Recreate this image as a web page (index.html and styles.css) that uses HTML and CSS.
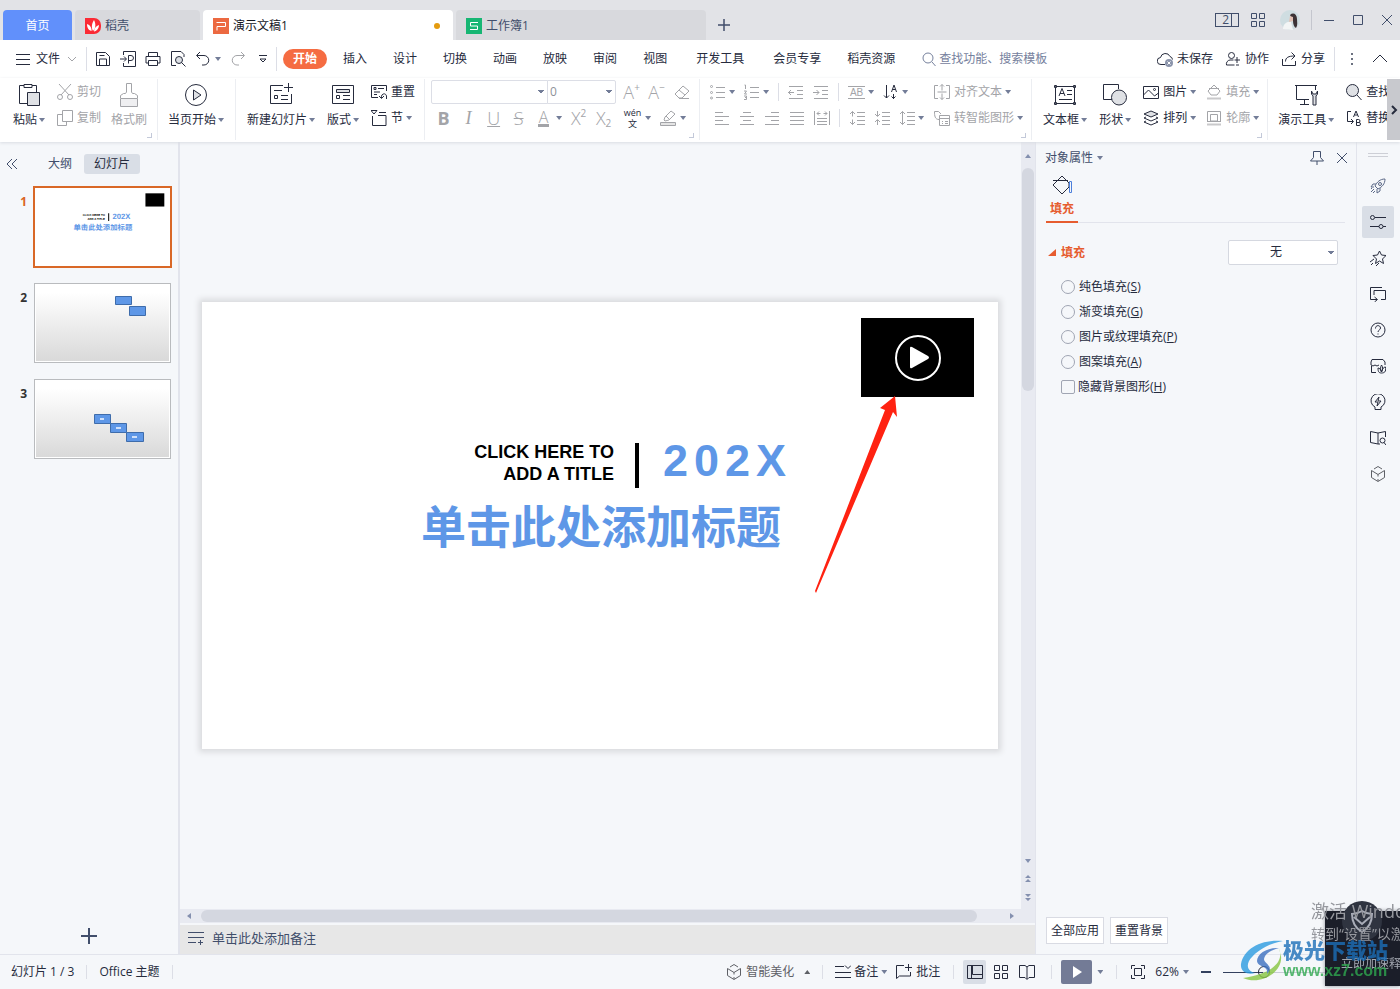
FILE: index.html
```html
<!DOCTYPE html>
<html lang="zh-CN">
<head>
<meta charset="utf-8">
<title>演示文稿1</title>
<link rel="stylesheet" href="styles.css">
</head>
<body>
<svg class="sprite" aria-hidden="true">
  <symbol id="i-plus" viewBox="0 0 16 16"><path d="M8 0v16M0 8h16" stroke-width="2"/></symbol>
  <symbol id="i-cube" viewBox="0 0 16 16"><path d="M4 3l4-2.500 4 2.500M1.500 4.500v7L8 15.500l6.500-4v-7L8 8.500zM8 8.500v2M8 15v-2"/></symbol>
  <symbol id="i-lines" viewBox="0 0 16 16"><path d="M6 3.500h9M6 8.500h9M6 13.500h9"/></symbol>
</svg>

<header class="titlebar">
  <nav class="tabs">
    <button class="tab home">首页</button>
    <button class="tab docer"><svg class="ic" viewBox="0 0 16 16"><path class="solid" fill="#fb2b35" d="M0 0h9a7 7 0 0 1 7 7v2a7 7 0 0 1-7 7H0z"/><path fill="#fff" class="solid" d="M8 13C6 9 7 5 9 2c2 4 2 8-1 11zM6.500 13C3 12 2 9 2 6c3 1 5 4 4.500 7zM9 13.500c0-3 2-5.500 5-6.500 0 3-2 6-5 6.500z"/></svg>稻壳</button>
    <button class="tab doc active"><svg class="ic" viewBox="0 0 16 16"><path class="solid" fill="#ec6941" d="M0 0h16v16H0z"/><path stroke="#fff" d="M4 12.500V8.500h8.500v-4H3.500"/></svg>演示文稿1<span class="dirty"></span></button>
    <button class="tab doc"><svg class="ic" viewBox="0 0 16 16"><path class="solid" fill="#16b673" d="M0 0h16v16H0z"/><path stroke="#fff" d="M12 4.500H4.500v3.500h7v3.500H4"/></svg>工作簿1</button>
    <button class="newtab" aria-label="新建"><svg class="s12" viewBox="0 0 16 16"><use href="#i-plus"/></svg></button>
  </nav>
  <div class="winctl">
    <button class="two" aria-label="窗口数"><span>2</span><i></i></button>
    <button class="apps" aria-label="应用"><svg class="ic" viewBox="0 0 16 16"><path d="M1.500 1.500h5v5h-5zM9.500 1.500h5v5h-5zM1.500 9.500h5v5h-5zM9.500 9.500h5v5h-5z"/></svg></button>
    <svg class="avatar" viewBox="0 0 20 20"><circle class="solid" cx="10" cy="10" r="10" fill="#cfdde1"/><path class="solid" fill="#f3f5f5" d="M3 19c0-5 4-8 8-7l2 8z"/><path class="solid" fill="#3d3336" d="M10 5c3-3 7-1 7 4 0 3 1 6-1 9-2-1-3-4-3-7z"/><path class="solid" fill="#e2c2b5" d="M10 6l3 1v4l-4 1z"/></svg>
    <span class="bar"></span>
    <button aria-label="最小化"><svg class="s12" viewBox="0 0 12 12"><path d="M1 6.500h10"/></svg></button>
    <button aria-label="最大化"><svg class="s12" viewBox="0 0 12 12"><path d="M1.500 1.500h9v9h-9z"/></svg></button>
    <button aria-label="关闭"><svg class="s12" viewBox="0 0 12 12"><path d="M1 1l10 10M11 1L1 11"/></svg></button>
  </div>
</header>

<div class="menubar">
  <button class="file"><svg class="ic" viewBox="0 0 16 16"><path d="M1 3.500h14M1 8.500h14M1 13.500h14"/></svg>文件<svg class="s10 pale" viewBox="0 0 10 10"><path d="M1 3l4 4 4-4"/></svg></button>
  <span class="bar"></span>
  <div class="quick">
    <button aria-label="保存"><svg class="ic" viewBox="0 0 16 16"><path d="M1.500 1.500h9l4 4v9h-13zM4.500 14v-6h7v6M4.500 4.500h5"/></svg></button>
    <button aria-label="输出"><svg class="ic" viewBox="0 0 16 16"><path d="M3.500 4V.500h12v15h-12V12M0 8h6M4 5.500L6.500 8 4 10.500M8.500 12.500v-8h2.500a2.200 2.200 0 0 1 0 5H8.500"/></svg></button>
    <button aria-label="打印"><svg class="ic" viewBox="0 0 16 16"><path d="M3.500 5V1.500h9V5M3.500 12h-2.500V5.500h14V12h-2.500M3.500 9.500h9v5h-9z"/></svg></button>
    <button aria-label="打印预览"><svg class="ic" viewBox="0 0 16 16"><path d="M6 14.500H1.500v-14H11l3 3V6"/><circle cx="9" cy="9" r="3.500" fill="#dde0e5"/><path d="M11.500 11.500l4 4"/></svg></button>
    <button aria-label="撤销"><svg class="ic" viewBox="0 0 16 16"><path d="M5 1L1.500 4.500 5 8M2 4.500h7a4.500 4.500 0 0 1 0 9.500H7"/></svg><i class="caret"></i></button>
    <button class="pale" aria-label="恢复"><svg class="ic" viewBox="0 0 16 16"><path d="M11 1l3.500 3.500L11 8M14 4.500H7A4.500 4.500 0 0 0 7 14h2"/></svg></button>
    <button aria-label="更多"><svg class="s10" viewBox="0 0 10 10"><path d="M1 1.500h8M2 5l3 3 3-3z"/></svg></button>
  </div>
  <span class="bar"></span>
  <nav class="menus">
    <button class="on">开始</button><button>插入</button><button>设计</button><button>切换</button><button>动画</button><button>放映</button><button>审阅</button><button>视图</button><button class="wide">开发工具</button><button class="wide">会员专享</button><button>稻壳资源</button>
  </nav>
  <label class="search"><svg class="ic" viewBox="0 0 16 16"><circle cx="6" cy="7" r="5"/><path d="M10 11l3.500 4"/></svg><input type="text" placeholder="查找功能、搜索模板"></label>
  <div class="account">
    <button><svg class="ic" viewBox="0 0 16 16"><path d="M8 13.500H4a3.500 3.500 0 0 1-.5-7A5 5 0 0 1 13 5.500a3.500 3.500 0 0 1 2.500 3"/><circle class="solid" cx="12" cy="12" r="4" fill="#8b94ab"/><path stroke="#fff" d="M10.500 10.500l3 3M13.500 10.500l-3 3"/></svg>未保存</button>
    <button><svg class="ic" viewBox="0 0 16 16"><circle cx="6.500" cy="4.500" r="3"/><path d="M8.500 9H5a4 4 0 0 0-3.500 5h8M12 6v6M9.500 9h5.500M11 14h3"/></svg>协作</button>
    <button><svg class="ic" viewBox="0 0 16 16"><path d="M1.500 8v6.500h13V10M4.500 10.500c0-4 3-5.500 9-5.500M10.500 1.500L14 5l-3.500 3.500"/></svg>分享</button>
    <span class="bar"></span>
    <button aria-label="更多"><svg class="ic" viewBox="0 0 16 16"><path stroke-width="2" stroke="#6b7180" d="M8 2v2M8 7v2M8 12v2"/></svg></button>
    <button aria-label="折叠"><svg class="ic" viewBox="0 0 16 16"><path d="M1 11l7-7 7 7"/></svg></button>
  </div>
</div>

<section class="ribbon">
  <div class="group g1">
    <button class="big"><svg class="s24" viewBox="0 0 24 24"><path d="M7 2.500H2.500v18H10M15 2.500h4.500V9M7 1.500h8v3H7z"/><path fill="#dfe1e5" d="M10.500 9.500h12v13h-12z"/></svg><span>粘贴<i class="caret"></i></span></button>
    <div class="rows pale">
      <button class="sm"><svg class="ic" viewBox="0 0 16 16"><path d="M2 0l10 11M14 0L4 11"/><circle cx="3" cy="13" r="2.500"/><circle cx="13" cy="13" r="2.500"/></svg>剪切</button>
      <button class="sm"><svg class="ic" viewBox="0 0 16 16"><path d="M5.500 .500h10v11h-10zM5 4.500H.500v11h9V12"/></svg>复制</button>
    </div>
    <button class="big pale"><svg class="s24" viewBox="0 0 24 24"><path fill="#efeff1" d="M3.500 15.500h17v8h-17z"/><path d="M3.500 15V12.500l3-2h2L9.500 9V.500h5V9l1 1.500h2l3 2V15"/></svg><span>格式刷</span></button>
    <i class="corner"></i>
  </div>
  <div class="group g2">
    <button class="big"><svg class="s24" viewBox="0 0 24 24"><circle cx="12" cy="12" r="10.500"/><path fill="#dfe1e5" d="M9.500 7v10l7.500-5z"/></svg><span>当页开始<i class="caret"></i></span></button>
  </div>
  <div class="group g3">
    <button class="big"><svg class="s24" viewBox="0 0 24 24"><path d="M14 2.500H1.500v18h21V11M19.500 0v9M15 4.500h9M5 7.500h8M5.500 12.500h3v3h-3zM12 12.500h7M12 16.500h7"/></svg><span>新建幻灯片<i class="caret"></i></span></button>
    <button class="big"><svg class="s24" viewBox="0 0 24 24"><path d="M1.500 2.500h21v18h-21zM5.500 12.500h3v3h-3zM12 12.500h7M12 16.500h7"/><path fill="#dfe1e5" d="M5.500 6.500h13v3h-13z"/></svg><span>版式<i class="caret"></i></span></button>
    <div class="rows">
      <button class="sm"><svg class="ic" viewBox="0 0 16 16"><path d="M7 13.500H.500v-12h15V7M3 3.500h2v2H3zM7 4.500h6M3 8h6M3 10.500h3M8 12l2.500 2.500L13 12M10.500 14c-1-4 4-6 5-2v3"/></svg>重置</button>
      <button class="sm"><svg class="ic" viewBox="0 0 16 16"><path d="M1.500 6v9.500h13.500v-10H7M0 .500h6L3 4zM8 2.500h7"/></svg>节<i class="caret"></i></button>
    </div>
  </div>
  <div class="group g4">
    <div class="rows">
      <div class="line">
        <select class="font" aria-label="字体"><option></option></select><select class="size" aria-label="字号"><option>0</option></select>
        <button class="t">A<sup>+</sup></button><button class="t">A<sup>−</sup></button>
        <button class="t"><svg class="ic" viewBox="0 0 16 16"><path d="M9 2l6 5-7 7H5L1 10zM5 6l6 5M5 14.500h10"/></svg></button>
      </div>
      <div class="line fmt">
        <button class="t"><b>B</b></button><button class="t"><em>I</em></button><button class="t"><u>U</u></button><button class="t"><s>S</s></button><button class="t"><span class="fc">A</span></button><i class="caret"></i>
        <button class="t">X<sup>2</sup></button><button class="t">X<sub>2</sub></button>
        <button class="t wen"><span>wén</span><span>文</span></button><i class="caret"></i>
        <button class="t"><svg class="ic" viewBox="0 0 16 16"><path d="M4 10l1-3 6-6 4 3-6 6-4 1zM6 6l4 4"/><path fill="#e4e4e4" d="M.500 12.500h15v3H.500z"/></svg></button><i class="caret"></i>
      </div>
    </div>
    <i class="corner"></i>
  </div>
  <div class="group g5 pale">
    <div class="col">
      <div class="line">
        <button class="i"><svg class="ic" viewBox="0 0 16 16"><use href="#i-lines"/><circle cx="1.500" cy="2.500" r="1"/><circle cx="1.500" cy="8.500" r="1"/><circle cx="1.500" cy="14" r="1"/></svg><i class="caret"></i></button>
        <button class="i"><svg class="ic" viewBox="0 0 16 16"><use href="#i-lines"/><path d="M.500 1h1v4M0 7h2.500L.500 10H3M0 12h2.500v3.500H0M1 13.500h1"/></svg><i class="caret"></i></button>
        <span class="bar"></span>
        <button class="i"><svg class="ic" viewBox="0 0 16 16"><path d="M1 2.500h14M9 6.500h6M9 10.500h6M1 14.500h14M0 8.500h6M3 6L.500 8.500 3 11"/></svg></button>
        <button class="i"><svg class="ic" viewBox="0 0 16 16"><path d="M1 2.500h14M9 6.500h6M9 10.500h6M1 14.500h14M0 8.500h6M3.500 6L6 8.500 3.500 11"/></svg></button>
        <span class="bar"></span>
        <button class="i"><span class="ab">AB</span><i class="caret"></i></button>
        <button class="i dark"><svg class="ic" viewBox="0 0 16 16"><path d="M3.500 1v13M1 11.500L3.500 14 6 11.500M10.500 10v5M8.500 12.500l2 2 2-2M8.500 8l2.500-7 2.500 7M9.500 5.500h3"/></svg><i class="caret"></i></button>
      </div>
      <div class="line second">
        <button class="i"><svg class="ic" viewBox="0 0 16 16"><path d="M1 2.500h8M1 6.500h14M1 10.500h8M1 14.500h14"/></svg></button>
        <button class="i"><svg class="ic" viewBox="0 0 16 16"><path d="M4 2.500h8M1 6.500h14M4 10.500h8M1 14.500h14"/></svg></button>
        <button class="i"><svg class="ic" viewBox="0 0 16 16"><path d="M7 2.500h8M1 6.500h14M7 10.500h8M1 14.500h14"/></svg></button>
        <button class="i"><svg class="ic" viewBox="0 0 16 16"><path d="M1 2.500h14M1 6.500h14M1 10.500h14M1 14.500h14"/></svg></button>
        <button class="i"><svg class="ic" viewBox="0 0 16 16"><path d="M.500 1v14M15.500 1v14M3 8.500h10M3 11.500h10M3 14.500h10M3 3.500h3.500M9.500 3.500H13M5 1.500l-2 2 2 2M11 1.500l2 2-2 2"/></svg></button>
        <span class="bar"></span>
        <button class="i"><svg class="ic" viewBox="0 0 16 16"><path d="M8 2.500h8M8 6.500h8M8 10.500h8M8 14.500h8M3.500 1.500v5M1 4l2.500-2.500L6 4M3.500 9.500v5M1 12l2.500 2.500L6 12"/></svg></button>
        <button class="i"><svg class="ic" viewBox="0 0 16 16"><path d="M8 2.500h8M8 6.500h8M8 10.500h8M8 14.500h8M3.500 1v5M1 4l2.500 2.500L6 4M3.500 10v5M1 12l2.500-2.500L6 12"/></svg></button>
        <button class="i"><svg class="ic" viewBox="0 0 16 16"><path d="M8 2.500h8M8 6.500h8M8 10.500h8M8 14.500h8M3.500 1.500v13M1 4l2.500-2.500L6 4M1 12l2.500 2.500L6 12"/></svg><i class="caret"></i></button>
      </div>
    </div>
    <div class="rows">
      <button class="sm"><svg class="ic" viewBox="0 0 16 16"><path d="M4 1.500H.500v13H4M12 1.500h3.500v13H12M3.500 8h9M8 .500v6M6 2.500l2-2 2 2M8 9.500v6M6 13.500l2 2 2-2"/></svg>对齐文本<i class="caret"></i></button>
      <button class="sm"><svg class="ic" viewBox="0 0 16 16"><path d="M5 9.500C1 9.500.500 6 .500 1.500M.500 1.500h4L7 4M5.500 5.500h10v10h-10zM5.500 8.500h10M8 11.500h1M11 11.500h3M8 13.500h1M11 13.500h3"/></svg>转智能图形<i class="caret"></i></button>
    </div>
    <i class="corner"></i>
  </div>
  <div class="group g6">
    <button class="big"><svg class="s24" viewBox="0 0 24 24"><path d="M2.500 3.500h19v17h-19zM1.500 2.500h2v2h-2zM20.500 2.500h2v2h-2zM1.500 19.500h2v2h-2zM20.500 19.500h2v2h-2zM6 13l3-7.500L12 13M7 10.500h4M14 7.500h5M14 11.500h5M6 16.500h13"/></svg><span>文本框<i class="caret"></i></span></button>
    <button class="big"><svg class="s24" viewBox="0 0 24 24"><path d="M9 16.500H.500v-15h15V6"/><circle cx="16" cy="14.500" r="7.500" fill="#dfe1e5"/></svg><span>形状<i class="caret"></i></span></button>
    <div class="rows">
      <button class="sm"><svg class="ic" viewBox="0 0 16 16"><path d="M.500 2.500h15v12H.500zM.500 11l5-5 6 6 4-3"/><circle cx="11.500" cy="5.500" r="1"/></svg>图片<i class="caret"></i></button>
      <button class="sm"><svg class="ic" viewBox="0 0 16 16"><path fill="#dfe1e5" d="M1 4l7-3 7 3-7 3z"/><path d="M3 7L1 8l7 3 7-3-2-1M3 11l-2 1 7 3 7-3-2-1"/></svg>排列<i class="caret"></i></button>
    </div>
    <div class="rows pale">
      <button class="sm"><svg class="ic" viewBox="0 0 16 16"><path d="M3 4.500h10M8 1l6 6-3 4H5L2 7z"/><path stroke="#c9c9cb" stroke-width="2" d="M1 14.500h14"/></svg>填充<i class="caret"></i></button>
      <button class="sm"><svg class="ic" viewBox="0 0 16 16"><path d="M1.500 11V1.500h13V11M4.500 11V4.500h7V11zM1 11.500h14"/><path stroke="#c9c9cb" stroke-width="2" d="M1 14.500h14"/></svg>轮廓<i class="caret"></i></button>
    </div>
    <i class="corner"></i>
  </div>
  <div class="group g7">
    <button class="big"><svg class="s24" viewBox="0 0 24 24"><path d="M1 2.500h22M2.500 3v13.500H15M21.500 3v4M10.500 17v4M6 21.500h9"/><path fill="#dfe1e5" d="M17.500 8v3l1.500 2v9h3v-9l1.500-2V8l-1.500 3h-3z"/></svg><span>演示工具<i class="caret"></i></span></button>
    <div class="rows">
      <button class="sm"><svg class="ic" viewBox="0 0 16 16"><circle cx="6.500" cy="6.500" r="6" fill="#dfe1e5"/><path d="M11 11l4.500 5"/></svg>查找</button>
      <button class="sm"><svg class="ic" viewBox="0 0 16 16"><path d="M5 1.500H1.500v10H7M5 9l2.500 2.500L5 14M7.500 7L10 1l2.500 6M8.500 5h3M10.500 9.500v6h2.500a1.500 1.500 0 0 0 0-3h-2.500 2a1.500 1.500 0 0 0 0-3z"/></svg>替换</button>
    </div>
  </div>
  <button class="more" aria-label="向右滚动"><svg class="s10" viewBox="0 0 10 10"><path stroke-width="2" d="M3 1l4 4-4 4"/></svg></button>
</section>

<main class="work">
  <aside class="outline">
    <div class="otabs">
      <button class="fold" aria-label="收起"><svg class="s12" viewBox="0 0 12 12"><path d="M6 1L1 6l5 5M11 1L6 6l5 5"/></svg></button>
      <button>大纲</button><button class="on">幻灯片</button>
    </div>
    <ol class="thumbs">
      <li class="on"><span>1</span><div class="thumb"><svg viewBox="0 0 796 447"><rect class="solid" x="655" y="22" width="113" height="79" fill="#000"/><path stroke="#000" stroke-width="6" d="M435 141v46"/><text x="412" y="158" text-anchor="end" font-size="17">CLICK HERE TO</text><text x="412" y="180" text-anchor="end" font-size="17">ADD A TITLE</text><text class="blue" x="458" y="178" font-size="46">202X</text><text class="blue" x="224" y="244" font-size="44">单击此处添加标题</text></svg></div></li>
      <li><span>2</span><div class="thumb grad"><svg viewBox="0 0 133 76"><g class="shape"><path d="M79.500 11.500h16v8h-16zM93.500 21.500h16v9h-16z"/></g></svg></div></li>
      <li><span>3</span><div class="thumb grad"><svg viewBox="0 0 133 76"><g class="shape"><path d="M58.500 33.500h16v9h-16zM74.500 42.500h16v9h-16zM90.500 51.500h17v9h-17z"/></g><path stroke="#cfe0fa" stroke-width="2" d="M64 38h4M80 47h5M96 56h5"/></svg></div></li>
    </ol>
    <button class="add" aria-label="新建幻灯片"><svg class="ic" viewBox="0 0 16 16"><use href="#i-plus"/></svg></button>
  </aside>

  <section class="stage">
    <div class="view">
      <div class="canvas">
        <article class="slide">
          <p class="sub">CLICK HERE TO<br>ADD A TITLE</p>
          <span class="rule"></span>
          <p class="year">202X</p>
          <h1>单击此处添加标题</h1>
          <button class="video" aria-label="播放"><svg viewBox="0 0 48 48"><circle cx="24" cy="24" r="22" stroke="#fff" stroke-width="2"/><path class="solid" fill="#fff" d="M16 14q0-2 2-1l16 9q2 1.500 0 3L18 34q-2 1-2-1z"/></svg></button>
          <svg class="arrow" viewBox="0 0 84 198"><path class="solid" fill="#ff2211" d="M80 0L65 12 70 14 0 195 1 197 78 16 82 21z"/></svg>
        </article>
      </div>
      <div class="vscroll"><i class="up"></i><b></b><i class="down"></i><svg viewBox="0 0 8 28"><path class="solid" d="M1 4l3-3 3 3zM1 8l3-3 3 3zM1 20l3 3 3-3zM1 24l3 3 3-3z"/></svg></div>
    </div>
    <div class="hscroll"><i class="left"></i><b></b><i class="right"></i></div>
    <div class="notes"><svg class="ic" viewBox="0 0 16 16"><path d="M0 2.500h16M0 7.500h16M0 12.500h8M12.500 10v5M10 12.500h5"/></svg>单击此处添加备注</div>
  </section>

  <aside class="props">
    <header><h2>对象属性<i class="caret"></i></h2><button aria-label="固定"><svg class="ic" viewBox="0 0 16 16"><path d="M4.500 1.500h7v6l3 3.500h-13l3-3.500zM8 11v4"/></svg></button><button aria-label="关闭"><svg class="s12" viewBox="0 0 12 12"><path d="M1 1l10 10M11 1L1 11"/></svg></button></header>
    <div class="ptabs"><button><svg class="s24" viewBox="0 0 24 24"><path d="M3 7.500h15M12 3l7 7v4l-7 7-9-9z"/><path stroke="#4c7fdb" d="M19.500 8.500h2v11h-2z"/></svg>填充</button></div>
    <div class="fillhead"><h3>填充</h3><select aria-label="填充"><option>无</option></select></div>
    <form class="opts">
      <label><input type="radio" name="fill"><span>纯色填充(<u>S</u>)</span></label>
      <label><input type="radio" name="fill"><span>渐变填充(<u>G</u>)</span></label>
      <label><input type="radio" name="fill"><span>图片或纹理填充(<u>P</u>)</span></label>
      <label><input type="radio" name="fill"><span>图案填充(<u>A</u>)</span></label>
      <label><input type="checkbox"><span>隐藏背景图形(<u>H</u>)</span></label>
    </form>
    <footer><button>全部应用</button><button>重置背景</button></footer>
  </aside>

  <nav class="rail">
    <i class="grip"></i>
    <button aria-label="快捷"><svg class="ic" viewBox="0 0 16 16"><path stroke="#5d6a88" d="M15 1c-5 0-8 3-10 7l3 3c4-2 7-5 7-10zM6 6H3L1 9h3M10 10v3l-3 2v-4M4 11l-3 3M2 10l-1 1M5 13l-2 2"/><circle stroke="#5d6a88" cx="10" cy="6" r="1.500"/></svg></button>
    <button class="on" aria-label="属性"><svg class="ic" viewBox="0 0 16 16"><circle cx="2.500" cy="3.500" r="2"/><path d="M5 3.500h11M0 12.500h9M13 12.500h3"/><circle cx="11" cy="12.500" r="2"/></svg></button>
    <button aria-label="动画"><svg class="ic" viewBox="0 0 16 16"><path d="M9.500 1l2 4 4.500.500-3.500 3.500 1 4.500-4-2.500-4 2.500 1-4.500L3 5.500 7.500 5zM4 9l-4 3M3 13l-2 2M9 13l-3 3"/></svg></button>
    <button aria-label="切换"><svg class="ic" viewBox="0 0 16 16"><path d="M12 1.500H.500v12H7M4 9V4.500h11.500v9H11M4.500 11l3 2.500-3 2.500"/></svg></button>
    <button aria-label="帮助"><svg class="ic" viewBox="0 0 16 16"><circle cx="8" cy="8" r="7"/><path d="M5.500 6.500c0-4 5-3.500 5-.5 0 2-2.500 2-2.500 4M8 11.500v1"/></svg></button>
    <button aria-label="素材"><svg class="ic" viewBox="0 0 16 16"><path d="M6 14.500H1.500V8M1 4l1-2.500h11L15 4v3M1 4v3q2 2 4 0 2 2 4 0M8 10c0 4 1 5 3.500 5s5-1 4-6c-2 0-3 2-4 5-1-3-2-4-3.500-4zM11.500 14c-1.500-3-1-5 0-7 1.500 2 1.500 4 0 7"/></svg></button>
    <button aria-label="灵感"><svg class="ic" viewBox="0 0 16 16"><path d="M5 13a7 7 0 1 1 6 0v2.500H5zM9 3L5 8h3l-1 4 4-5H8z"/></svg></button>
    <button aria-label="阅读"><svg class="ic" viewBox="0 0 16 16"><path d="M8 3v11l-7.500-1.500v-11L8 3l7.500-1.500V7M8 14h2"/><circle cx="12.500" cy="10.500" r="2.500"/><path d="M14 12.500l2 2.500"/></svg></button>
    <button aria-label="美化"><svg class="ic soft" viewBox="0 0 16 16"><use href="#i-cube"/></svg></button>
  </nav>
</main>

<footer class="status">
  <span>幻灯片 1 / 3</span><span class="bar"></span><span>Office 主题</span><span class="bar"></span>
  <div class="tools">
    <button class="soft beauty"><svg class="ic" viewBox="0 0 16 16"><use href="#i-cube"/></svg>智能美化<i class="caret up"></i></button>
    <span class="bar"></span>
    <button class="note"><svg class="ic" viewBox="0 0 16 16"><path d="M0 2.500h9M0 8.500h16M0 13.500h16M10 1.500l3 3 3-3"/></svg>备注<i class="caret"></i></button>
    <button class="comment"><svg class="ic" viewBox="0 0 16 16"><path d="M8 1.500H.500v13l3-2.500h11V8M12.500 0v7M9 3.500h7"/></svg>批注</button>
    <span class="bar"></span>
    <div class="views">
      <button class="on" aria-label="普通视图"><svg class="ic" viewBox="0 0 16 16"><path d="M.500 1.500h15v13H.500zM5.500 1.500v9M5.500 10.500h10M4.500 2v12.500"/></svg></button>
      <button aria-label="浏览"><svg class="ic" viewBox="0 0 16 16"><path d="M1.500 1.500h5v5h-5zM9.500 1.500h5v5h-5zM1.500 9.500h5v5h-5zM9.500 9.500h5v5h-5z"/></svg></button>
      <button aria-label="阅读视图"><svg class="ic" viewBox="0 0 16 16"><path d="M.500 1.500H6l2 1.500 2-1.500h5.500v12H10l-2 2-2-2H.500zM8 3v12"/></svg></button>
    </div>
    <span class="bar"></span>
    <button class="play" aria-label="播放"><svg class="ic" viewBox="0 0 16 16"><path class="solid" fill="#fff" d="M4 2l9 6-9 6z"/></svg></button><i class="caret"></i>
    <span class="bar"></span>
    <button class="fit" aria-label="适应"><svg class="ic" viewBox="0 0 16 16"><path d="M1.500 5V1.500H5M11 1.500h3.500V5M14.500 11v3.500H11M5 14.500H1.500V11M4.500 4.500h7v7h-7z"/></svg></button>
    <button class="pct">62%<i class="caret"></i></button>
    <button class="minus" aria-label="缩小"><i></i></button>
    <input type="range" min="0" max="100" value="32" aria-label="缩放">
  </div>
</footer>

<div class="booster"><svg class="shield" viewBox="0 0 40 40"><circle class="solid" cx="20" cy="20" r="20" fill="#2f3440"/><path stroke="#a9adb8" stroke-width="2" d="M10 13q5 0 10-3 5 3 10 3c0 9-3 14-10 18-7-4-10-9-10-18zM12 16l8 7 8-7"/></svg><span>立即加速释放</span></div>
<div class="activate"><p>激活 Windows</p><p>转到“设置”以激活</p></div>
<div class="brand"><svg viewBox="0 0 46 42"><path class="solid" fill="#2b9ae0" d="M43 1C22-1 4 8 1 24c-1 9 8 11 14 9-9-2-9-10-3-16C19 9 31 3 43 1z"/><path class="solid" fill="#86c540" d="M39 8c5 12-4 25-36 30 18 8 40-6 38-22z"/><path class="solid" fill="#3b6fc0" d="M39 8C27 7 17 14 17 21c1 7 12 4 10 13 8-8-3-10-3-15 1-6 8-9 15-11z"/></svg><p><strong>极光下载站</strong><span>www.xz7.com</span></p></div>
</body>
</html>
```

FILE: styles.css
```css
* { box-sizing: border-box; }
body {
  margin: 0;
  height: 100vh;
  display: flex;
  flex-direction: column;
  overflow: hidden;
  background: #f5f7fa;
  color: #262b3d;
  font: 12px/16px "Open Sans", "Noto Sans CJK SC", sans-serif;
}
button, select, input { font: inherit; color: inherit; }
button { background: none; border: 0; padding: 0; display: flex; align-items: center; flex-shrink: 0; white-space: nowrap; }
p, h1, h2, h3, ol { margin: 0; padding: 0; }
h2, h3 { font-size: 12px; font-weight: 400; }
svg { fill: none; stroke: currentColor; stroke-width: 1; flex-shrink: 0; display: block; }
svg .solid, svg text { stroke: none; }
.sprite { position: absolute; width: 0; height: 0; }
.ic { width: 16px; height: 16px; }
.s10 { width: 10px; height: 10px; }
.s12 { width: 12px; height: 12px; }
.s24 { width: 24px; height: 24px; }
.pale { color: #a3a4a8; }
.soft { color: #5e6066; }
.bar { width: 1px; background: #dcdee6; flex-shrink: 0; }
.caret {
  width: 6px;
  height: 4px;
  flex-shrink: 0;
  background: #737d98;
  clip-path: polygon(0 0, 100% 0, 50% 100%);
}
.caret.up { clip-path: polygon(0 100%, 100% 100%, 50% 0); background: #5e6066; }

/* title bar */
.titlebar { display: flex; justify-content: space-between; height: 40px; background: #e2e3e7; flex-shrink: 0; color: #414e6b; }
.tabs { display: flex; align-items: flex-end; gap: 3px; padding-left: 3px; }
.tab { height: 30px; background: #d8d9dd; border-radius: 4px 4px 0 0; gap: 4px; padding: 1px 10px 0; }
.tab.home { width: 69px; background: #6190fb; color: #fff; justify-content: center; }
.tab.docer { width: 125px; }
.tab.doc { width: 250px; }
.tab.active { background: #fff; color: #14171f; }
.dirty { width: 6px; height: 6px; border-radius: 3px; background: #e49b0f; margin-left: auto; margin-right: 3px; }
.newtab { height: 30px; padding: 0 9px; }
.winctl { display: flex; align-items: center; gap: 17px; padding-right: 7px; }
.winctl .bar { height: 20px; background: #c4c6ce; margin: 0 -6px; }
.winctl .avatar { width: 20px; height: 20px; }
.winctl .apps { margin-right: -3px; }
.two { width: 24px; height: 14px; border: 1px solid #414e6b; justify-content: flex-end; gap: 2px; margin-right: -6px; }
.two i { width: 7px; height: 12px; border-left: 1px solid #414e6b; }

/* menu bar */
.menubar { display: flex; align-items: center; height: 38px; background: #fff; flex-shrink: 0; padding-left: 15px; }
.menubar .bar { height: 24px; }
.file { gap: 5px; margin-right: 9px; }
.file .s10 { margin-left: 2px; }
.quick { display: flex; align-items: center; gap: 9px; padding: 0 8px; }
.quick button { gap: 4px; }
.quick button:last-child { margin-left: 3px; }
.menus { display: flex; align-items: center; padding-left: 6px; }
.menus button { padding: 0 13px; height: 20px; }
.menus .wide { margin-left: 3px; }
.menus .on { padding: 0 10px; margin-right: 3px; border-radius: 10px; background: #f56c42; color: #fff; font-weight: 700; }
.search { display: flex; align-items: center; color: #76819d; margin-left: 14px; gap: 1px; }
.search input { width: 120px; border: 0; padding: 0; background: none; outline: 0; }
.search input::placeholder { color: #76819d; opacity: 1; }
.account { display: flex; align-items: center; margin-left: auto; gap: 12px; padding-right: 12px; }
.account button { gap: 4px; }
.account .bar { margin: 0 -3px; }

/* ribbon */
.ribbon { display: flex; height: 64px; background: #fff; flex-shrink: 0; position: relative; z-index: 1; box-shadow: 0 1px 3px #d9dce2; overflow: visible; padding-top: 1px; }
.group { display: flex; position: relative; border-right: 1px solid #eceef2; height: 61px; flex-shrink: 0; }
.big { flex-direction: column; padding-top: 4px; align-self: flex-start; }
.big span { display: flex; align-items: center; gap: 2px; height: 26px; }
.rows { display: flex; flex-direction: column; }
.rows .sm { height: 26px; gap: 4px; }
.line { display: flex; align-items: center; height: 26px; }
.corner { position: absolute; right: 5px; bottom: 2px; width: 5px; height: 5px; border: solid #c3c9d9; border-width: 0 1px 1px 0; }
.g1 { padding: 0 10px 0 13px; }
.g1 .rows { margin: 0 10px 0 12px; }
.g2 { padding: 0 11px 0 10px; }
.g3 { padding: 0 9px 0 11px; gap: 12px; }
.sm .caret { margin-left: -1px; }
.g4 { padding: 0 8px 0 6px; width: 275px; }
.g4 select { height: 24px; border: 1px solid #dcdee6; appearance: none; padding: 0 2px; color: #8f9199; }
.g4 .font { width: 117px; border-radius: 2px 0 0 2px; }
.g4 .size { width: 69px; margin-left: -1px; border-radius: 0 2px 2px 0; }
.g4 .font, .g4 .size, .fillhead select {
  background: linear-gradient(to bottom right, #737d98 50%, transparent 50%) right 3px center / 3px 4px no-repeat,
    linear-gradient(to bottom left, #737d98 50%, transparent 50%) right 6px center / 3px 4px no-repeat, #fff;
}
.t { width: 25px; justify-content: center; color: #a3a4a8; font: 300 18px/20px "Open Sans", sans-serif; }
.t sup, .t sub { font-size: 10px; line-height: 10px; font-weight: 400; }
.t sup { align-self: flex-start; }
.t sub { align-self: flex-end; }
.t b { font-weight: 700; }
.t em { font-family: "Liberation Serif", serif; }
.line > select + .t { margin-left: 3px; }
.fc { border-bottom: 3px solid #a3a4a8; line-height: 14px; padding: 0 1px; font-size: 16px; }
.fmt .caret + .t { margin-left: 4px; }
.t.wen { flex-direction: column; margin-left: 4px; color: #262b3d; font: 9px/11px "Open Sans", "Noto Sans CJK SC", sans-serif; }
.g5 { padding: 0 8px 0 10px; width: 332px; justify-content: space-between; }
.g5 .i { gap: 3px; }
.g5 .line { gap: 9px; }
.g5 .second { padding-left: 4px; }
.g5 .bar { height: 18px; }
.g5 .dark { color: #262b3d; }
.ab { border: solid; border-width: 1px 0; width: 17px; font: 10px/11px "Liberation Sans", sans-serif; text-align: center; }
.g6 { padding: 0 8px 0 11px; gap: 12px; }
.g6 .rows + .rows { margin-left: -2px; }
.g7 { padding-left: 10px; gap: 12px; border: 0; flex: 1; width: 0; overflow: hidden; }
.more { width: 13px; background: #c8c9ce; height: 61px; justify-content: center; position: relative; }

/* work area */
.work { display: flex; flex: 1; min-height: 0; }
.outline { width: 180px; border-right: 2px solid #e2e4ec; display: flex; flex-direction: column; padding-top: 12px; flex-shrink: 0; color: #414e6b; }
.otabs { display: flex; height: 20px; align-items: center; padding-left: 6px; }
.otabs button { height: 20px; padding: 0 12px; border-radius: 3px; }
.otabs .fold { padding: 0; margin-right: 18px; }
.otabs .on { background: #d9dee6; color: #262b3d; padding: 0 10px; }
.thumbs { list-style: none; display: flex; flex-direction: column; gap: 16px; padding-top: 13px; }
.thumbs li { display: flex; }
.thumbs li > span { width: 34px; padding: 7px 7px 0 0; text-align: right; font-weight: 700; color: #333; }
.thumbs .on > span { color: #db6423; }
.thumb { width: 137px; height: 80px; border: 1px solid #b9bbbe; padding: 1px; background: #fff; overflow: hidden; }
.on .thumb { border-color: #d96827; outline: 1px solid #d96827; }
.thumb svg { width: 133px; height: 76px; }
.thumb text { font-family: "Liberation Sans", "Noto Sans CJK SC", sans-serif; font-weight: 700; fill: #000; text-rendering: geometricPrecision; }
.thumb .blue { fill: #5e97e7; }
.thumb.grad svg { background: linear-gradient(#fff 10%, #d9d9d9); }
.shape { fill: #5e97e7; stroke: #3e6cab; }
.add { margin: auto auto 10px; }

.stage { flex: 1; display: flex; flex-direction: column; min-width: 0; }
.view { flex: 1; display: flex; min-height: 0; }
.canvas { flex: 1; display: flex; align-items: center; justify-content: center; padding-right: 1px; }
.slide { position: relative; width: calc(100% - 44px); aspect-ratio: 796 / 447; background: #fff; box-shadow: 0 0 6px 3px #d9dadd; font-family: "Liberation Sans", "Noto Sans CJK SC", sans-serif; font-weight: 700; }
.slide > * { position: absolute; }
.sub { right: 384px; top: 139px; font-size: 18px; line-height: 22px; text-align: right; color: #000; }
.rule { left: 433px; top: 141px; width: 4px; height: 45px; background: #000; }
.year { left: 461px; top: 133px; font-size: 45px; line-height: 52px; letter-spacing: 6px; color: #5e97e7; }
.slide h1 { left: 219px; top: 197px; font-size: 45px; line-height: 60px; white-space: nowrap; color: #5e97e7; }
.video { right: 24px; top: 16px; width: 113px; height: 79px; background: #000; justify-content: center; }
.video svg { width: 48px; height: 48px; }
.arrow { left: 613px; top: 94px; width: 84px; height: 198px; }
.vscroll, .hscroll { background: #e8eaf1; display: flex; align-items: center; flex-shrink: 0; }
.vscroll { width: 14px; flex-direction: column; padding: 12px 0 7px; }
.vscroll b { width: 12px; height: 223px; margin: 10px 0 auto; border-radius: 6px; background: #d4d7e0; }
.vscroll i, .hscroll i { width: 6px; height: 4px; background: #8490af; }
.vscroll .up { clip-path: polygon(0 100%, 100% 100%, 50% 0); }
.vscroll .down { clip-path: polygon(0 0, 100% 0, 50% 100%); }
.vscroll svg { width: 8px; height: 28px; margin-top: 11px; fill: #8490af; }
.hscroll { height: 14px; padding: 0 21px 0 7px; margin-bottom: 2px; }
.hscroll b { flex: 1; height: 12px; margin: 0 33px 0 10px; border-radius: 6px; background: #d4d7e0; }
.hscroll i { width: 4px; height: 6px; }
.hscroll .left { clip-path: polygon(100% 0, 100% 100%, 0 50%); }
.hscroll .right { clip-path: polygon(0 0, 0 100%, 100% 50%); }
.notes { height: 29px; background: #e7e7e7; display: flex; align-items: center; gap: 8px; padding: 0 0 4px 8px; color: #414e6b; font-size: 13px; }

.props { width: 321px; border-left: 1px solid #e2e4ec; display: flex; flex-direction: column; padding: 8px 0 0 9px; flex-shrink: 0; }
.props header { display: flex; align-items: center; gap: 11px; padding-right: 8px; color: #414e6b; }
.props h2 { display: flex; align-items: center; gap: 4px; margin-right: auto; }
.ptabs { display: flex; margin: 7px 11px 0 1px; border-bottom: 1px solid #e2e4ec; }
.ptabs button { flex-direction: column; width: 32px; height: 50px; gap: 4px; color: #e65c2f; font-weight: 700; border-bottom: 2px solid #e65c2f; margin-bottom: -1px; }
.ptabs svg { color: #262b3d; }
.fillhead { display: flex; align-items: center; justify-content: space-between; margin: 17px 18px 0 3px; }
.fillhead h3 { color: #e65c2f; font-weight: 700; display: flex; align-items: center; gap: 5px; }
.fillhead h3::before { content: ""; width: 8px; height: 7px; background: #e65c2f; clip-path: polygon(100% 0, 100% 100%, 0 100%); }
.fillhead select { appearance: none; width: 110px; height: 25px; border: 1px solid #d5d8e0; border-radius: 2px; text-align: center; text-align-last: center; padding: 0 16px 2px 2px; }
.opts { padding: 9px 0 0 16px; }
.opts label { display: flex; align-items: center; height: 25px; gap: 4px; }
.opts input { appearance: none; margin: 0; width: 14px; height: 14px; border: 1px solid #a0a5b3; border-radius: 7px; }
.opts input[type="checkbox"] { border-radius: 2px; margin-right: -1px; }
.props footer { display: flex; gap: 6px; margin: auto 0 10px 1px; }
.props footer button { border: 1px solid #d9dbe3; background: #fff; height: 27px; padding: 0 4px; }

.rail { width: 44px; border-left: 1px solid #e2e4ec; display: flex; flex-direction: column; align-items: center; gap: 4px; padding: 11px 1px 0 0; flex-shrink: 0; }
.rail button { width: 32px; height: 32px; justify-content: center; border-radius: 2px; }
.rail .on { background: #d9dee6; }
.grip { width: 20px; height: 4px; border: solid #cdcfd6; border-width: 1px 0; margin-bottom: 9px; }

/* status bar */
.status { display: flex; align-items: center; height: 35px; border-top: 1px solid #e2e4ec; flex-shrink: 0; padding-left: 11px; gap: 12px; }
.status .bar { height: 14px; }
.tools { display: flex; align-items: center; margin-left: auto; gap: 9px; padding-right: 57px; }
.tools button { gap: 4px; }
.tools .beauty { margin-right: 3px; }
.beauty .caret { margin-left: 6px; }
.tools .note { gap: 3px; margin-left: 3px; }
.tools .comment { margin-right: 4px; }
.views { display: flex; gap: 3px; margin-right: 4px; }
.views button { width: 23px; height: 24px; justify-content: center; border-radius: 2px; }
.views .on { background: #d9dee6; }
.play { width: 31px; height: 24px; background: #737b96; border-radius: 2px; justify-content: center; }
.play + .caret { margin: 0 4px 0 -4px; }
.fit { margin-left: 4px; }
.minus i { width: 10px; height: 2px; background: #33405e; }
.minus { margin: 0 3px; }
.status input { appearance: none; width: 120px; margin: 0; height: 14px; background: linear-gradient(#33405e, #33405e) left center / 40px 1px no-repeat, linear-gradient(#c9ccd6, #c9ccd6) center / 100% 1px no-repeat; }
.status input::-webkit-slider-thumb { appearance: none; width: 12px; height: 12px; border: 1px solid #262b3d; border-radius: 6px; background: transparent; }

/* desktop overlays */
.booster { position: fixed; right: 0; bottom: 3px; width: 75px; height: 75px; background: #1b1e29; color: #a3a7b0; box-shadow: 0 0 4px #8b8e98; overflow: visible; }
.booster .shield { position: absolute; left: 17px; top: -10px; width: 40px; height: 40px; }
.booster span { position: absolute; left: 16px; top: 45px; width: 59px; overflow: hidden; white-space: nowrap; }
.activate { position: fixed; left: calc(100% - 89px); bottom: 45px; width: 89px; overflow: hidden; white-space: nowrap; color: #96989e; font-size: 14px; line-height: 20px; }
.activate p:first-child { font-size: 18px; line-height: 26px; }
.brand { position: fixed; right: 10px; bottom: 7px; display: flex; opacity: 0.8; font-family: "Liberation Sans", "Noto Sans CJK SC", sans-serif; font-weight: 700; }
.brand svg { width: 46px; height: 42px; }
.brand p { display: flex; flex-direction: column; color: #1c6fb8; width: 107px; margin-left: -3px; }
.brand strong { font-size: 21px; line-height: 22px; }
.brand span { font-size: 16px; line-height: 18px; color: #2fa84f; }
```
